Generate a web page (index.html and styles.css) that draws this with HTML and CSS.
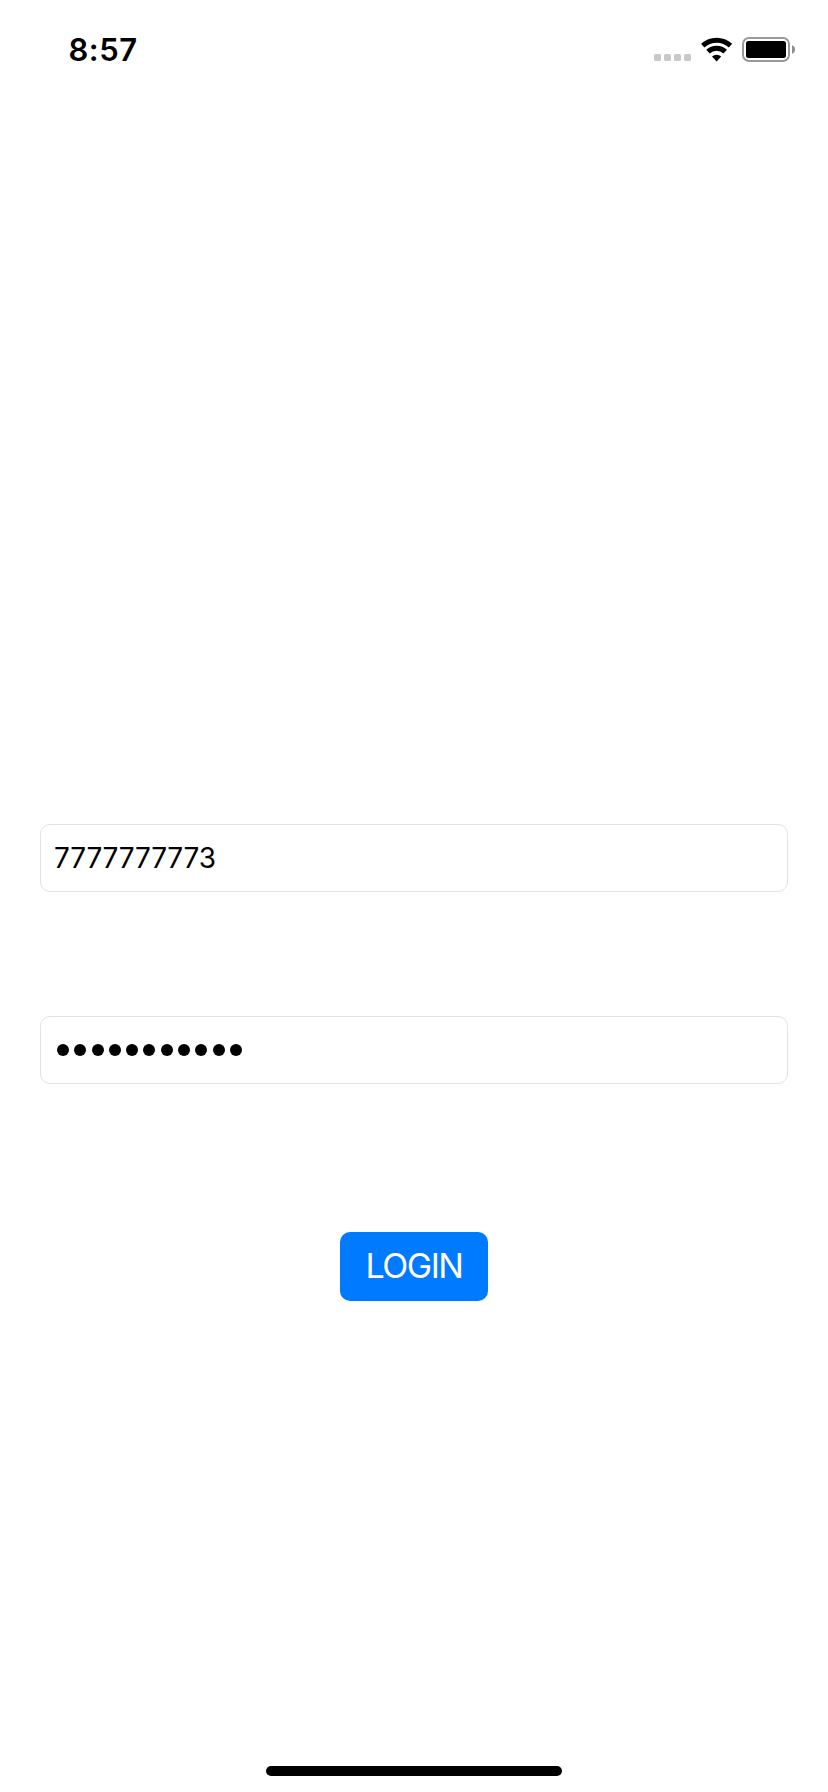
FILE: index.html
```
<!DOCTYPE html>
<html lang="en">
<head>
<meta charset="utf-8">
<title>Login</title>
<link rel="stylesheet" href="styles.css">
</head>
<body>
<div class="screen">
  <header class="status-bar">
    <span class="clock">8:57</span>
    <div class="indicators">
      <div class="signal"><i></i><i></i><i></i><i></i></div>
      <svg class="wifi" width="32" height="25" viewBox="0 0 32 25" fill="none" stroke="#000" stroke-width="5">
        <path d="M1.7 8.6 A20.6 20.6 0 0 1 29.5 8.6"/>
        <path d="M7 14.6 A12.4 12.4 0 0 1 24.2 14.6"/>
        <path d="M11 19.4 A7 7 0 0 1 20.2 19.4 L15.6 24.4 Z" fill="#000" stroke="none"/>
      </svg>
      <svg class="battery" width="54" height="26" viewBox="0 0 54 26">
        <rect x="1" y="1" width="46" height="23" rx="6" fill="none" stroke="#999" stroke-width="2"/>
        <rect x="4" y="4" width="40" height="17" rx="2.5" fill="#000"/>
        <path d="M50 8.3 Q53 9.3 53 12.5 Q53 15.7 50 16.7 Z" fill="#8c8c8c"/>
      </svg>
    </div>
  </header>
  <main class="form">
    <div class="field" role="textbox"><span class="value">7777777773</span></div>
    <div class="field" role="textbox" aria-label="Password">
      <div class="mask"><i></i><i></i><i></i><i></i><i></i><i></i><i></i><i></i><i></i><i></i><i></i></div>
    </div>
    <button class="login" type="button">LOGIN</button>
  </main>
  <footer class="home-indicator"></footer>
</div>
</body>
</html>
```
FILE: styles.css
```
* { box-sizing: border-box; }
body { margin: 0; background: #fff; color: #000; font-family: Inter, "Liberation Sans", sans-serif; }
.screen { width: 828px; height: 1792px; display: flex; flex-direction: column; background: #fff; }
.status-bar { height: 88px; padding: 37px 32px 0 68.5px; display: flex; justify-content: space-between; align-items: flex-start; }
.clock { font-size: 31px; line-height: 26px; font-weight: 600; letter-spacing: 0.5px; }
.indicators { display: flex; align-items: flex-start; }
.signal { display: flex; gap: 3px; padding-top: 17px; margin-right: 10px; }
.signal i { width: 7px; height: 7px; border-radius: 1.5px; background: #c9c9c9; }
.wifi { display: block; margin-right: 9px; }
.battery { display: block; }
.form { flex: 1; padding: 736px 40px 0; display: flex; flex-direction: column; }
.field { height: 68px; margin-bottom: 124px; padding: 0 13px; border: 1px solid #e2e2e2; border-radius: 10px; display: flex; align-items: center; }
.value { font-size: 28px; line-height: 34px; letter-spacing: -0.2px; }
.mask { display: flex; gap: 5.3px; padding-left: 3px; }
.mask i { width: 12px; height: 12px; border-radius: 50%; background: #000; }
.login { align-self: center; width: 148px; height: 69px; margin-top: 24px; padding: 0 0 2px; border: 0; border-radius: 10px; background: #007aff; color: #fff; font: 400 34px/67px Inter, "Liberation Sans", sans-serif; letter-spacing: -1.5px; }
.home-indicator { align-self: center; width: 296px; height: 10px; margin-bottom: 16px; border-radius: 5px; background: #000; }
```
